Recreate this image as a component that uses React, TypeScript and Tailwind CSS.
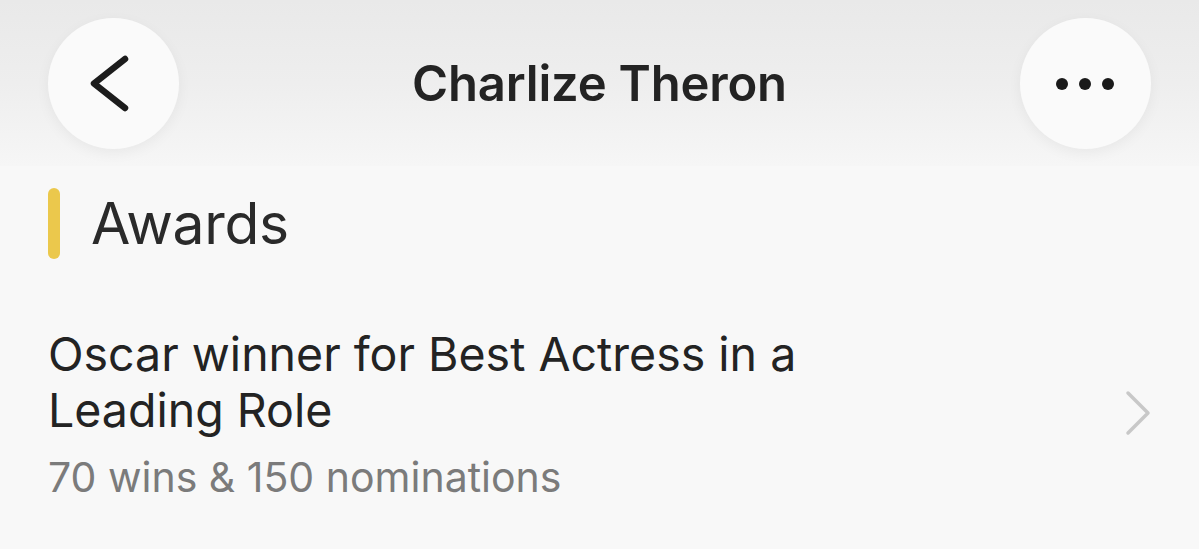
import React from "react";

export default function App() {
  return (
    <div
      className="w-[1199px] h-[549px] overflow-hidden bg-[#f8f8f8] text-[#222222]"
      style={{ fontFamily: "Inter, 'Noto Sans', sans-serif" }}
    >
      <div className="h-[166px] bg-gradient-to-b from-[#e9e9e9] via-[#eeeeee] to-[#f6f6f6] px-[48px] pt-[18px] flex items-start justify-between">
        <div className="w-[131px] h-[131px] rounded-full bg-[#fafafa] shadow-[0_4px_14px_rgba(0,0,0,0.05)] flex items-center justify-center">
          <svg width="131" height="131" viewBox="0 0 131 131">
            <path d="M77 41 L46 65.5 L77 90" fill="none" stroke="#1c1c1c" strokeWidth="6.5" strokeLinecap="round" strokeLinejoin="round" />
          </svg>
        </div>
        <div className="h-[131px] flex items-center text-[49px] font-semibold tracking-[-0.2px] text-[#232323]">
          Charlize Theron
        </div>
        <div className="w-[131px] h-[131px] rounded-full bg-[#fafafa] shadow-[0_4px_14px_rgba(0,0,0,0.05)] flex items-center justify-center gap-[11px]">
          <span className="w-[12px] h-[12px] rounded-full bg-[#1a1a1a]" />
          <span className="w-[12px] h-[12px] rounded-full bg-[#1a1a1a]" />
          <span className="w-[12px] h-[12px] rounded-full bg-[#1a1a1a]" />
        </div>
      </div>
      <div className="px-[48px] pt-[22px] flex items-center gap-[31px]">
        <div className="w-[12px] h-[71px] rounded-full bg-[#ebc84c]" />
        <div className="text-[57px] leading-[71px] text-[#2a2a2a] tracking-[-0.3px]">Awards</div>
      </div>
      <div className="pl-[48px] pr-[48px] pt-[67px] flex items-start justify-between">
        <div>
          <div className="text-[46.5px] leading-[56px] text-[#232323] w-[850px]">
            Oscar winner for Best Actress in a<br />Leading Role
          </div>
          <div className="text-[41px] leading-[50px] text-[#7b7b7b] mt-[14px]">70 wins &amp; 150 nominations</div>
        </div>
        <svg width="26" height="46" viewBox="0 0 26 46" className="mt-[64px]">
          <path d="M3 3 L23 23 L3 43" fill="none" stroke="#c8c8c8" strokeWidth="3.5" strokeLinecap="round" strokeLinejoin="round" />
        </svg>
      </div>
    </div>
  );
}
